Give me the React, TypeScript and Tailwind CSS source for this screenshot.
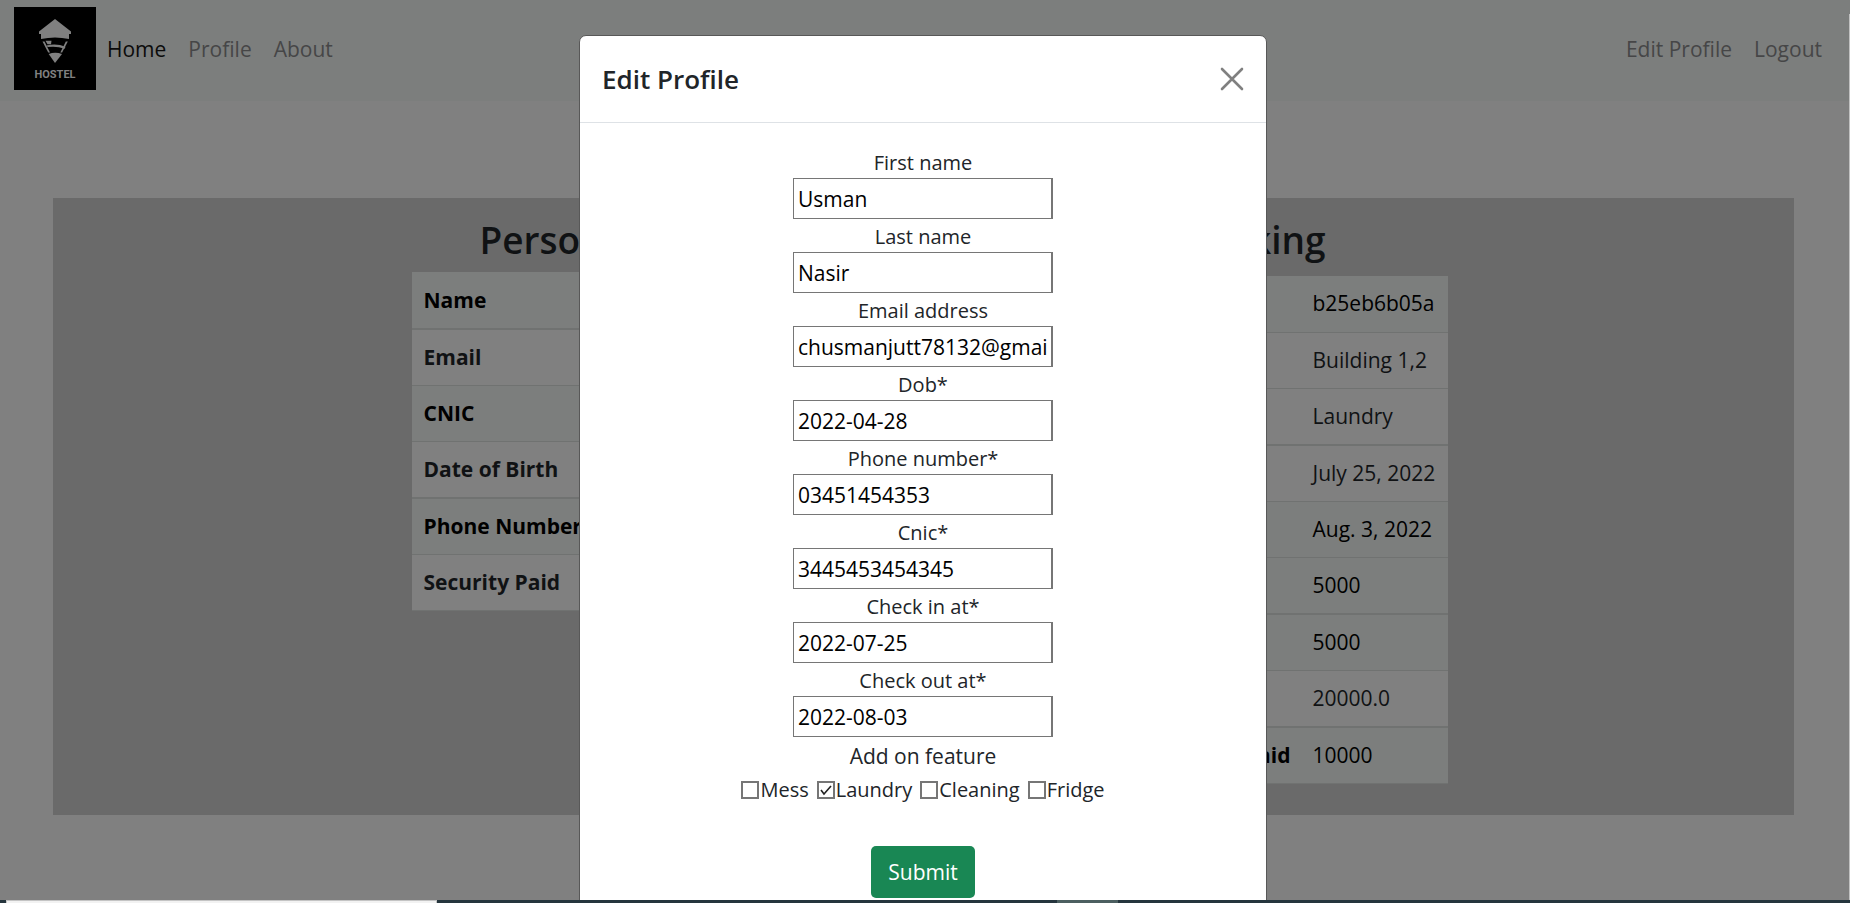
import React from 'react';

type Field = { id: string; label: string; value: string };

const fields: Field[] = [
  { id: 'first-name', label: 'First name', value: 'Usman' },
  { id: 'last-name', label: 'Last name', value: 'Nasir' },
  { id: 'email', label: 'Email address', value: 'chusmanjutt78132@gmail.com' },
  { id: 'dob', label: 'Dob*', value: '2022-04-28' },
  { id: 'phone', label: 'Phone number*', value: '03451454353' },
  { id: 'cnic', label: 'Cnic*', value: '3445453454345' },
  { id: 'check-in', label: 'Check in at*', value: '2022-07-25' },
  { id: 'check-out', label: 'Check out at*', value: '2022-08-03' },
];

const features = [
  { id: 'mess', label: 'Mess', checked: false },
  { id: 'laundry', label: 'Laundry', checked: true },
  { id: 'cleaning', label: 'Cleaning', checked: false },
  { id: 'fridge', label: 'Fridge', checked: false },
];

type Row = { label: string; value: string; striped: boolean; ruled: boolean };

const personal: Row[] = [
  { label: 'Name', value: '', striped: true, ruled: true },
  { label: 'Email', value: '', striped: false, ruled: false },
  { label: 'CNIC', value: '', striped: true, ruled: false },
  { label: 'Date of Birth', value: '', striped: false, ruled: true },
  { label: 'Phone Number', value: '', striped: true, ruled: false },
  { label: 'Security Paid', value: '', striped: false, ruled: false },
];

const booking: Row[] = [
  { label: '', value: 'b25eb6b05a', striped: true, ruled: false },
  { label: '', value: 'Building 1,2', striped: false, ruled: false },
  { label: '', value: 'Laundry', striped: false, ruled: true },
  { label: '', value: 'July 25, 2022', striped: false, ruled: false },
  { label: '', value: 'Aug. 3, 2022', striped: true, ruled: false },
  { label: '', value: '5000', striped: true, ruled: true },
  { label: '', value: '5000', striped: true, ruled: false },
  { label: '', value: '20000.0', striped: false, ruled: true },
  { label: 'Paid', value: '10000', striped: true, ruled: false },
];

function rowClass(row: Row) {
  const tone = row.striped ? 'bg-[#7c7e7d] text-black' : 'bg-[#808080]';
  const rule = row.ruled ? 'h-[57px] border-b-2' : 'h-[56px] border-b';
  return `${tone} ${rule} border-[#707271]`;
}

function Logo() {
  return (
    <svg viewBox="0 0 82 83" className="h-[83px] w-[82px] shrink-0 bg-black" role="img" aria-label="Hostel">
      <g fill="#808080">
        <path d="M41 12 57 24.500v2.500h-2v5q-14-3-28 0v-5h-2v-2.500Z" />
        <path d="M28.500 34.500h2l5.500 11h-1.800Z" />
        <path d="M53.800 34.500h-2l-5.500 11h1.800Z" />
        <path d="M31.500 33.700h6l-.5 3.500h-3.500Z" />
        <path d="M32.500 38.500q10-2.500 19 1.300l-.8 2q-8-3-17-1.700Z" />
        <path d="M34.700 47q6.500-2.500 13.300 0L41 56Z" />
      </g>
      <text x="41" y="71" textAnchor="middle" fill="#808080" className="font-['Roboto',sans-serif] text-[11px] font-bold">HOSTEL</text>
    </svg>
  );
}

function Check({ id, label, checked }: { id: string; label: string; checked: boolean }) {
  return (
    <label htmlFor={id} className="flex items-center">
      <span className="relative flex">
        <input
          id={id}
          type="checkbox"
          defaultChecked={checked}
          className="peer size-[18px] appearance-none border-2 border-[#767676] bg-white"
        />
        <svg viewBox="0 0 18 18" className="pointer-events-none absolute inset-0 hidden size-[18px] peer-checked:block" fill="none" stroke="#222" strokeWidth="1.6">
          <path d="m4 9 3 4 7-8" />
        </svg>
      </span>
      <span className="pl-px">{label}</span>
    </label>
  );
}

export default function App() {
  return (
    <div className="relative h-screen overflow-hidden bg-[#808080] font-['Open_Sans',sans-serif] text-[21px] leading-[33px] text-[#101214]">
      <nav className="flex h-[101px] items-start bg-[#7c7e7d] pt-[7px] pr-[28px] pl-[14px]">
        <Logo />
        <div className="flex flex-1 items-center gap-[22px] pt-[26px] pl-[11px] text-[#464647]">
          <a href="#home" className="text-[#0b0b0b]">Home</a>
          <a href="#profile">Profile</a>
          <a href="#about">About</a>
          <a href="#edit" className="ml-auto">Edit Profile</a>
          <a href="#logout">Logout</a>
        </div>
      </nav>

      <main className="mt-[97px] mr-[56px] ml-[53px] flex h-[617px] justify-center bg-[#6a6a6a] pt-[20px] pl-[12px]">
        <section className="flex w-[468px] flex-col">
          <h2 className="pb-[10px] pl-[68px] text-[37px] leading-[44px] font-semibold">Personal Info</h2>
          <table className="w-full border-collapse">
            <tbody>
              {personal.map((row) => (
                <tr key={row.label} className={rowClass(row)}>
                  <th scope="row" className="pl-[12px] text-left font-bold">{row.label}</th>
                </tr>
              ))}
            </tbody>
          </table>
        </section>
        <section className="ml-[100px] flex w-[468px] flex-col">
          <h2 className="pr-[122px] pb-[14px] text-right text-[37px] leading-[44px] font-semibold">Booking</h2>
          <table className="w-full border-collapse">
            <tbody>
              {booking.map((row, i) => (
                <tr key={i} className={rowClass(row)}>
                  <th scope="row" className="pr-[22px] text-right font-bold">{row.label}</th>
                  <td className="w-[135px]">{row.value}</td>
                </tr>
              ))}
            </tbody>
          </table>
        </section>
      </main>

      <div className="absolute inset-0 flex items-start justify-center pt-[35px] pr-[4px]">
        <div role="dialog" aria-labelledby="dialog-title" className="w-[688px] rounded-t-[7px] border border-[#585858] bg-white text-[#212529]">
          <header className="flex h-[87px] items-center justify-between border-b border-[#dee2e6] px-[22px]">
            <h1 id="dialog-title" className="text-[26px] leading-[40px] font-semibold">Edit Profile</h1>
            <button type="button" aria-label="Close" className="text-[#808080]">
              <svg viewBox="0 0 24 24" className="size-[24px]" fill="none" stroke="currentColor" strokeWidth="2.6" strokeLinecap="round">
                <path d="M2 2 22 22M22 2 2 22" />
              </svg>
            </button>
          </header>
          <form className="flex h-[800px] flex-col items-center pt-[22px]">
            {fields.map((f) => (
              <div key={f.id} className="flex flex-col items-center">
                <label htmlFor={f.id} className="pt-[2px] text-[20px] leading-[31px]">{f.label}</label>
                <input
                  id={f.id}
                  defaultValue={f.value}
                  className="h-[41px] w-[260px] border border-r-2 border-[#767676] bg-white px-[4px] text-black"
                />
              </div>
            ))}
            <fieldset className="flex flex-col items-center pt-[2px] text-[20px]">
              <legend className="mx-auto pt-[4px] text-[21px] leading-[30px]">Add on feature</legend>
              <div className="flex gap-[8px]">
                {features.map((f) => (
                  <Check key={f.id} id={f.id} label={f.label} checked={f.checked} />
                ))}
              </div>
            </fieldset>
            <button type="submit" className="mt-[40px] h-[52px] w-[104px] rounded-[5px] bg-[#198754] text-white">Submit</button>
          </form>
        </div>
      </div>

      <div className="absolute top-[14px] right-0 bottom-[3px] w-px bg-[#c1c1c1]" />

      <footer className="absolute inset-x-0 bottom-0 flex h-[3px] bg-[#25353d]">
        <span className="ml-[6px] w-[431px] border border-b-0 border-[#c4c4c4] bg-[#f2f2f2]" />
        <span className="ml-[620px] w-[61px] bg-[#4c5f60]" />
      </footer>
    </div>
  );
}
